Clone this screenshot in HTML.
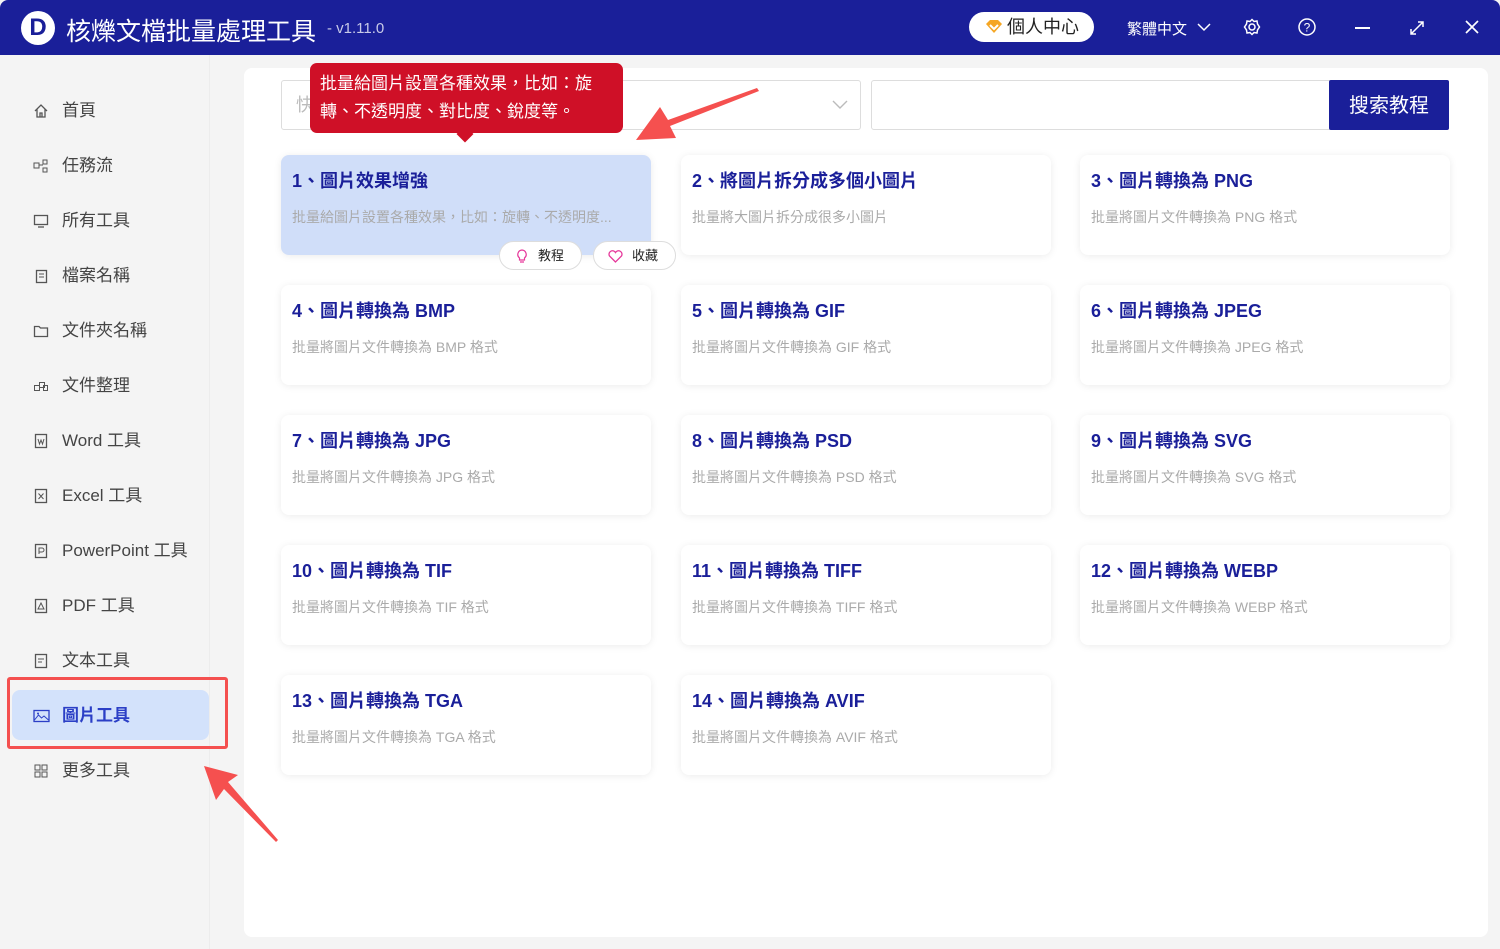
<!DOCTYPE html>
<html><head><meta charset="utf-8"><style>
*{margin:0;padding:0;box-sizing:border-box}
body{width:1500px;height:949px;overflow:hidden;background:#f4f4f4;font-family:"Liberation Sans","Noto Sans CJK TC",sans-serif;position:relative;text-spacing-trim:space-all}
.hdr{position:absolute;left:0;top:0;width:1500px;height:55px;background:#1a1f99;border-radius:8px 8px 0 0}
.logo{position:absolute;left:21px;top:11px;width:34px;height:34px;border-radius:50%;background:#fff;color:#1a1f99;font-weight:bold;font-size:24px;text-align:center;line-height:34px}
.title{position:absolute;left:66px;top:12px;color:#fff;font-size:25px}
.ver{position:absolute;left:327px;top:20px;color:#c8cae8;font-size:15px}
.pc{position:absolute;left:969px;top:12px;width:125px;height:30px;border-radius:15px;background:#fff;font-size:18px;color:#222;line-height:30px;padding-left:38px}
.w{position:absolute;color:#fff}
.side{position:absolute;left:0;top:55px;width:210px;height:894px;background:#f4f4f4;border-right:1px solid #ececec}
.it{position:absolute;left:33px;font-size:17px;color:#444;height:24px;line-height:24px}
.it svg{position:absolute;left:0;top:4px}
.it span{position:absolute;left:29px;white-space:nowrap}
.main{position:absolute;left:244px;top:68px;width:1244px;height:869px;background:#fff;border-radius:8px}
.card{position:absolute;width:370px;height:100px;background:#fff;border-radius:8px;box-shadow:0 1px 8px rgba(0,0,0,.08)}
.card h3{position:absolute;left:11px;top:12px;font-size:18px;color:#1a1f99;font-weight:bold;white-space:nowrap}
.card p{position:absolute;left:11px;top:52px;font-size:14px;color:#aaa;white-space:nowrap}
.pill{position:absolute;height:29px;border-radius:15px;background:#fff;border:1px solid #ddd;font-size:13px;color:#222;line-height:27px}
</style></head><body>
<div class="hdr">
<div class="logo">D</div>
<div class="title">核爍文檔批量處理工具</div>
<div class="ver">- v1.11.0</div>
<div class="pc"><svg style="position:absolute;left:16px;top:8px" width="18" height="14" viewBox="0 0 18 14"><path d="M1 4 L5 0 L13 0 L17 4 L9 13 Z" fill="#f5a623"/><path d="M5 5 L9 9 L13 5" stroke="#fff" stroke-width="2" fill="none"/></svg>個人中心</div>
<div class="w" style="left:1127px;top:18px;font-size:15px">繁體中文</div>
<svg style="position:absolute;left:1197px;top:22px" width="14" height="10"><path d="M1 2 L7 8 L13 2" stroke="#fff" stroke-width="1.5" fill="none"/></svg>
<svg style="position:absolute;left:1243px;top:18px" width="18" height="18" viewBox="0 0 18 18"><circle cx="9" cy="9" r="3" stroke="#fff" stroke-width="1.5" fill="none"/><path d="M9 1.5 L11 3.5 L14 3 L14.5 6 L16.5 9 L14.5 12 L14 15 L11 14.5 L9 16.5 L7 14.5 L4 15 L3.5 12 L1.5 9 L3.5 6 L4 3 L7 3.5 Z" stroke="#fff" stroke-width="1.5" fill="none"/></svg>
<svg style="position:absolute;left:1298px;top:18px" width="18" height="18"><circle cx="9" cy="9" r="8" stroke="#fff" stroke-width="1.5" fill="none"/><text x="9" y="13.5" fill="#fff" font-size="12" text-anchor="middle" font-family="Liberation Sans">?</text></svg>
<div style="position:absolute;left:1355px;top:27px;width:15px;height:2px;background:#fff"></div>
<svg style="position:absolute;left:1409px;top:20px" width="16" height="16"><path d="M2 14 L14 2 M9 2 L14 2 L14 7 M2 9 L2 14 L7 14" stroke="#fff" stroke-width="1.5" fill="none"/></svg>
<svg style="position:absolute;left:1464px;top:19px" width="16" height="16"><path d="M2 2 L14 14 M14 2 L2 14" stroke="#fff" stroke-width="1.7"/></svg>
</div>
<div class="side">
<div class="it" style="top:44px"><svg width="16" height="16"><path d="M2 8 L8 2 L14 8 M4 6 V14 H12 V6 M7 14 V10 H9 V14" stroke="#555" stroke-width="1.3" fill="none"/></svg><span>首頁</span></div>
<div class="it" style="top:99px"><svg width="16" height="16"><rect x="1" y="5" width="5" height="5" stroke="#555" fill="none"/><rect x="10" y="2" width="4" height="4" stroke="#555" fill="none"/><rect x="10" y="10" width="4" height="4" stroke="#555" fill="none"/><path d="M6 7 H10" stroke="#555"/></svg><span>任務流</span></div>
<div class="it" style="top:154px"><svg width="16" height="16"><rect x="1.5" y="2.5" width="13" height="9" stroke="#555" stroke-width="1.3" fill="none"/><path d="M5 14 H11" stroke="#555" stroke-width="1.3"/></svg><span>所有工具</span></div>
<div class="it" style="top:209px"><svg width="16" height="16"><rect x="3.5" y="2.5" width="10" height="12" stroke="#555" stroke-width="1.3" fill="none"/><path d="M6 6 H11 M6 9 H11" stroke="#555"/></svg><span>檔案名稱</span></div>
<div class="it" style="top:264px"><svg width="16" height="16"><path d="M1.5 3.5 H6 L7.5 5 H14.5 V13.5 H1.5 Z" stroke="#555" stroke-width="1.3" fill="none"/></svg><span>文件夾名稱</span></div>
<div class="it" style="top:319px"><svg width="16" height="16"><rect x="1.5" y="7.5" width="5" height="5" stroke="#555" fill="none"/><rect x="6.5" y="4.5" width="5" height="5" stroke="#555" fill="none"/><rect x="10.5" y="7.5" width="4" height="5" stroke="#555" fill="none"/></svg><span>文件整理</span></div>
<div class="it" style="top:374px"><svg width="16" height="16"><rect x="2.5" y="1.5" width="11" height="13" stroke="#555" stroke-width="1.3" fill="none"/><path d="M5 6 L6.5 11 L8 7 L9.5 11 L11 6" stroke="#555" fill="none"/></svg><span>Word 工具</span></div>
<div class="it" style="top:429px"><svg width="16" height="16"><rect x="2.5" y="1.5" width="11" height="13" stroke="#555" stroke-width="1.3" fill="none"/><path d="M5.5 5.5 L10.5 11 M10.5 5.5 L5.5 11" stroke="#555"/></svg><span>Excel 工具</span></div>
<div class="it" style="top:484px"><svg width="16" height="16"><rect x="2.5" y="1.5" width="11" height="13" stroke="#555" stroke-width="1.3" fill="none"/><path d="M6 11 V5 H9 A2 2 0 0 1 9 9 H6" stroke="#555" fill="none"/></svg><span>PowerPoint 工具</span></div>
<div class="it" style="top:539px"><svg width="16" height="16"><rect x="2.5" y="1.5" width="11" height="13" stroke="#555" stroke-width="1.3" fill="none"/><path d="M5 11 L8 5 L11 11 Z" stroke="#555" fill="none"/></svg><span>PDF 工具</span></div>
<div class="it" style="top:594px"><svg width="16" height="16"><rect x="2.5" y="1.5" width="11" height="13" stroke="#555" stroke-width="1.3" fill="none"/><path d="M5 6 H11 M5 9 H9" stroke="#555"/></svg><span>文本工具</span></div>
<div style="position:absolute;left:12px;top:635px;width:197px;height:50px;background:#d3e2fb;border-radius:8px"></div>
<div style="position:absolute;left:7px;top:622px;width:221px;height:72px;border:3px solid #f4504f;border-radius:3px"></div>
<div class="it" style="top:649px;color:#2b3fc6;font-weight:bold"><svg width="17" height="16"><rect x="1" y="2.5" width="15" height="11" stroke="#2b3fc6" stroke-width="1.3" fill="none"/><path d="M1.5 12 L5.5 7 L8.5 10 L11 8 L15.5 12" stroke="#2b3fc6" fill="none"/><circle cx="5" cy="5.5" r="1" fill="#2b3fc6"/></svg><span>圖片工具</span></div>
<div class="it" style="top:704px"><svg width="16" height="16"><rect x="2" y="2" width="5" height="5" stroke="#555" fill="none"/><rect x="9" y="2" width="5" height="5" stroke="#555" fill="none"/><rect x="2" y="9" width="5" height="5" stroke="#555" fill="none"/><rect x="9" y="9" width="5" height="5" stroke="#555" fill="none"/></svg><span>更多工具</span></div>
</div>
<div class="main">
<div style="position:absolute;left:37px;top:12px;width:580px;height:50px;border:1px solid #ddd;border-radius:3px;font-size:18px;color:#bbb;line-height:48px;padding-left:14px">快</div>
<svg style="position:absolute;left:588px;top:31px" width="16" height="12"><path d="M1 2 L8 9 L15 2" stroke="#bbb" stroke-width="1.4" fill="none"/></svg>
<div style="position:absolute;left:627px;top:12px;width:578px;height:50px;border:1px solid #ddd;border-radius:3px"></div>
<div style="position:absolute;left:1085px;top:12px;width:120px;height:50px;background:#1a1f99;border-radius:2px;color:#fff;font-size:20px;text-align:center;line-height:52px">搜索教程</div>
</div>
<div class="card" style="left:281px;top:155px;background:#d0def9"><h3>1、圖片效果增強</h3><p>批量給圖片設置各種效果，比如：旋轉、不透明度...</p></div>
<div class="pill" style="left:499px;top:241px;width:83px;padding-left:38px"><svg style="position:absolute;left:16px;top:7px" width="12" height="14"><path d="M6 1 A4.5 4.5 0 0 1 8.5 9 V11 H3.5 V9 A4.5 4.5 0 0 1 6 1 Z M4 13 H8" stroke="#e6399b" stroke-width="1.2" fill="none"/></svg>教程</div>
<div class="pill" style="left:593px;top:241px;width:83px;padding-left:38px"><svg style="position:absolute;left:14px;top:8px" width="15" height="13"><path d="M7.5 12 L1.5 6 A3 3 0 0 1 7.5 2.5 A3 3 0 0 1 13.5 6 Z" stroke="#e6399b" stroke-width="1.3" fill="none"/></svg>收藏</div>
<div class="card" style="left:681px;top:155px"><h3>2、將圖片拆分成多個小圖片</h3><p>批量將大圖片拆分成很多小圖片</p></div>
<div class="card" style="left:1080px;top:155px"><h3>3、圖片轉換為 PNG</h3><p>批量將圖片文件轉換為 PNG 格式</p></div>
<div class="card" style="left:281px;top:285px"><h3>4、圖片轉換為 BMP</h3><p>批量將圖片文件轉換為 BMP 格式</p></div>
<div class="card" style="left:681px;top:285px"><h3>5、圖片轉換為 GIF</h3><p>批量將圖片文件轉換為 GIF 格式</p></div>
<div class="card" style="left:1080px;top:285px"><h3>6、圖片轉換為 JPEG</h3><p>批量將圖片文件轉換為 JPEG 格式</p></div>
<div class="card" style="left:281px;top:415px"><h3>7、圖片轉換為 JPG</h3><p>批量將圖片文件轉換為 JPG 格式</p></div>
<div class="card" style="left:681px;top:415px"><h3>8、圖片轉換為 PSD</h3><p>批量將圖片文件轉換為 PSD 格式</p></div>
<div class="card" style="left:1080px;top:415px"><h3>9、圖片轉換為 SVG</h3><p>批量將圖片文件轉換為 SVG 格式</p></div>
<div class="card" style="left:281px;top:545px"><h3>10、圖片轉換為 TIF</h3><p>批量將圖片文件轉換為 TIF 格式</p></div>
<div class="card" style="left:681px;top:545px"><h3>11、圖片轉換為 TIFF</h3><p>批量將圖片文件轉換為 TIFF 格式</p></div>
<div class="card" style="left:1080px;top:545px"><h3>12、圖片轉換為 WEBP</h3><p>批量將圖片文件轉換為 WEBP 格式</p></div>
<div class="card" style="left:281px;top:675px"><h3>13、圖片轉換為 TGA</h3><p>批量將圖片文件轉換為 TGA 格式</p></div>
<div class="card" style="left:681px;top:675px"><h3>14、圖片轉換為 AVIF</h3><p>批量將圖片文件轉換為 AVIF 格式</p></div>
<div style="position:absolute;left:310px;top:63px;width:313px;height:70px;background:#cf1027;border-radius:7px;color:#fff;font-size:17px;line-height:28px;padding:7px 10px">批量給圖片設置各種效果，比如：旋轉、不透明度、對比度、銳度等。</div>
<div style="position:absolute;left:459px;top:128px;width:12px;height:12px;background:#cf1027;transform:rotate(45deg)"></div>
<svg style="position:absolute;left:0;top:0;pointer-events:none" width="1500" height="949">
<polygon points="757,88 668,120 660,107 636,140 676,138 670,126 759,91" fill="#f5504f"/>
<polygon points="278,840 228,782 238,775 204,766 216,800 224,789 276,842" fill="#f5504f"/>
</svg>
</body></html>
